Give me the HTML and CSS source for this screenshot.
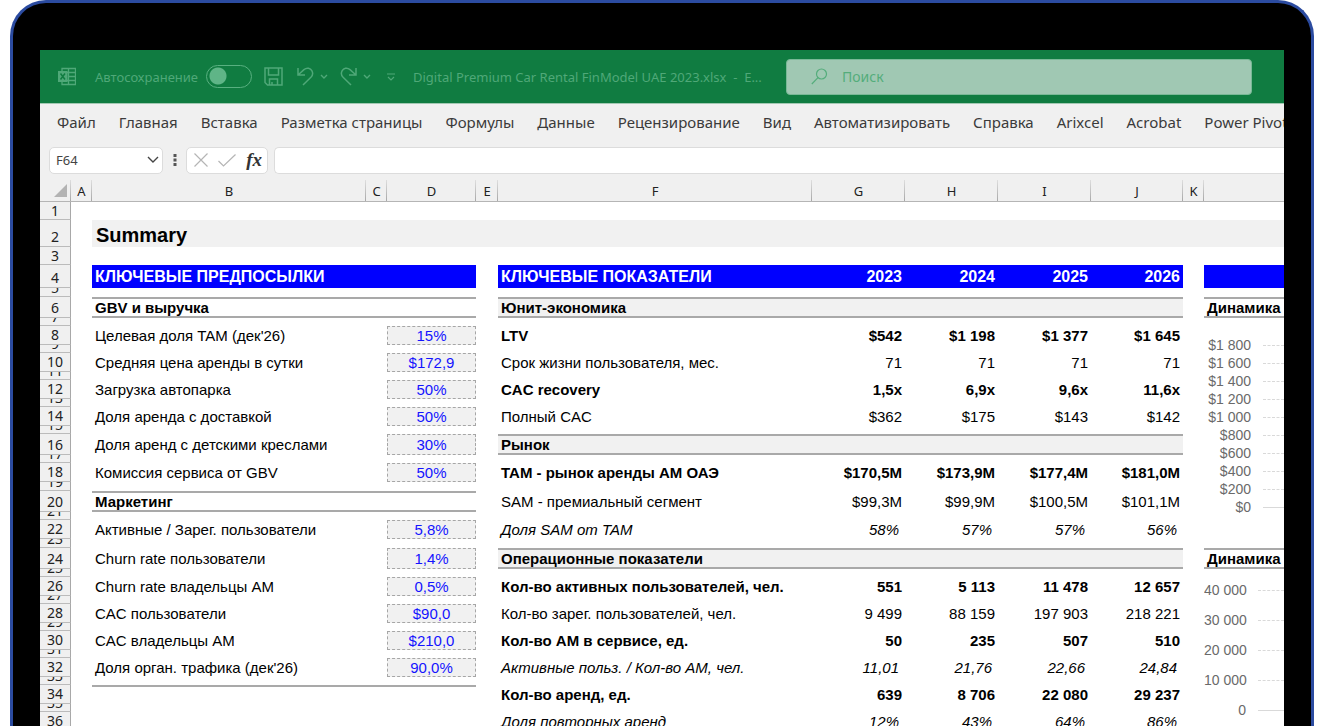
FILE: index.html
```html
<!DOCTYPE html>
<html lang="ru">
<head>
<meta charset="utf-8">
<title>Digital Premium Car Rental FinModel UAE 2023.xlsx</title>
<link rel="stylesheet" href="styles.css">
</head>
<body>
<div class="device">
<div class="screen">
  <header class="titlebar">
    <svg class="app-icon" width="18" height="19" viewBox="0 0 18 19" fill="none" stroke="currentColor" stroke-width="1.300"><path d="M4 4V1.500h13.500v16H4V15M10.500 1.500v16M4 5.500h13.500M10 9.500h7.500M4 13.500h13.500"/><path d="M0 4h9.500v11H0z" fill="currentColor" stroke="none"/><path class="app-x" d="M2.500 6.500l4.500 6M7 6.500l-4.500 6" stroke-width="1.500"/></svg>
    <label class="autosave"><span>Автосохранение</span><input type="checkbox" class="toggle"></label>
    <div class="quick">
      <button class="save" aria-label="Сохранить"><svg width="19" height="19" viewBox="0 0 19 19" fill="none" stroke="currentColor" stroke-width="1.500"><path d="M1 1h17v17H3.500L1 15.500zM4.500 1v7h10V1M5.500 18v-6h8v6M8 18v-3"/></svg></button>
      <button class="arrow" aria-label="Отменить"><svg width="17" height="19" viewBox="0 0 17 19" fill="none" stroke="currentColor" stroke-width="1.500"><path d="M1 1v7h7M1.300 7.700L7 2.600c3-2.500 6.500-1.200 7.800 1 1.400 2.400.8 4.900-.9 6.700L6 18"/></svg></button>
      <button class="more" aria-label="Список отмены"><svg width="8" height="6" viewBox="0 0 8 6" fill="none" stroke="currentColor" stroke-width="1.400"><path d="M1 1l3 3 3-3"/></svg></button>
      <button class="arrow" aria-label="Вернуть"><svg width="17" height="19" viewBox="0 0 17 19" fill="none" stroke="currentColor" stroke-width="1.500"><path d="M16 1v7H9M15.700 7.700L10 2.600C7 .1 3.500 1.400 2.200 3.600.8 6 1.400 8.500 3.100 10.300L11 18"/></svg></button>
      <button class="more" aria-label="Список возврата"><svg width="8" height="6" viewBox="0 0 8 6" fill="none" stroke="currentColor" stroke-width="1.400"><path d="M1 1l3 3 3-3"/></svg></button>
      <button class="custom" aria-label="Настройка панели"><svg width="8" height="8" viewBox="0 0 8 8" fill="none" stroke="currentColor" stroke-width="1.200"><path d="M0 1h8M1 4l3 3 3-3"/></svg></button>
    </div>
    <div class="doc">Digital Premium Car Rental FinModel UAE 2023.xlsx&nbsp; - &nbsp;E...</div>
    <label class="search"><svg width="17" height="17" viewBox="0 0 17 17" fill="none" stroke="currentColor" stroke-width="1.200"><circle cx="10.500" cy="6" r="5"/><path d="M7 9.700L.8 16"/></svg><input type="search" placeholder="Поиск" aria-label="Поиск"></label>
  </header>
  <nav class="ribbon">
    <button>Файл</button><button>Главная</button><button>Вставка</button><button>Разметка страницы</button><button>Формулы</button><button>Данные</button><button>Рецензирование</button><button>Вид</button><button>Автоматизировать</button><button>Справка</button><button>Arixcel</button><button>Acrobat</button><button>Power Pivot</button>
  </nav>
  <div class="formula">
    <label class="namebox"><input type="text" value="F64" aria-label="Имя ячейки"><svg width="12" height="8" viewBox="0 0 12 8" fill="none" stroke="currentColor" stroke-width="1.400"><path d="M1 1l5 5 5-5"/></svg></label>
    <svg class="dots" width="4" height="12" viewBox="0 0 4 12" fill="currentColor"><path d="M.5 0h3v3h-3zM.5 4.500h3v3h-3zM.5 9h3v3h-3z"/></svg>
    <div class="fx-group">
      <button aria-label="Отмена"><svg width="14" height="14" viewBox="0 0 14 14" fill="none" stroke="currentColor" stroke-width="1.200"><path d="M.5.5l13 13M13.500.5l-13 13"/></svg></button>
      <button aria-label="Ввод"><svg width="18" height="13" viewBox="0 0 18 13" fill="none" stroke="currentColor" stroke-width="1.200"><path d="M.5 7l5 5L17.500.5"/></svg></button>
      <button class="fx">fx</button>
    </div>
    <input class="formula-input" type="text" aria-label="Строка формул">
  </div>

  <table class="sheet">
    <colgroup><col class="c-head"><col class="c-s"><col class="c-b"><col class="c-s"><col class="c-d"><col class="c-e"><col class="c-f"><col class="c-y"><col class="c-y"><col class="c-y"><col class="c-j"><col class="c-s"><col></colgroup>
    <thead>
      <tr><th class="corner"><svg width="13" height="13" viewBox="0 0 13 13" fill="currentColor"><path d="M13 0v13H0z"/></svg></th><th>A</th><th>B</th><th>C</th><th>D</th><th>E</th><th>F</th><th>G</th><th>H</th><th>I</th><th>J</th><th>K</th><th></th></tr>
    </thead>
    <tbody>
      <tr class="r18"><th scope="row">1</th><td colspan="12"></td></tr>
      <tr class="r27"><th scope="row">2</th><td></td><td class="title" colspan="11">Summary</td></tr>
      <tr class="r18"><th scope="row">3</th><td colspan="12"></td></tr>
      <tr class="band"><th scope="row">4</th><td></td><td class="blue" colspan="3">КЛЮЧЕВЫЕ ПРЕДПОСЫЛКИ</td><td></td><td class="blue">КЛЮЧЕВЫЕ ПОКАЗАТЕЛИ</td><td class="blue n">2023</td><td class="blue n">2024</td><td class="blue n">2025</td><td class="blue n">2026</td><td></td><td class="blue"></td></tr>
      <tr class="gap tall"><th scope="row"><span>5</span></th><td colspan="12"></td></tr>
      <tr class="sec"><th scope="row">6</th><td></td><td class="rule" colspan="3">GBV и выручка</td><td></td><td class="rule fill" colspan="5">Юнит-экономика</td><td></td><td class="rule wide">Динамика</td></tr>
      <tr class="gap"><th scope="row"><span>7</span></th><td colspan="11"></td>
        <td class="chart" rowspan="17"><ul class="axis usd"><li><span>$1 800</span></li><li><span>$1 600</span></li><li><span>$1 400</span></li><li><span>$1 200</span></li><li><span>$1 000</span></li><li><span>$800</span></li><li><span>$600</span></li><li><span>$400</span></li><li><span>$200</span></li><li><span>$0</span></li></ul></td></tr>
      <tr><th scope="row">8</th><td></td><td>Целевая доля TAM (дек'26)</td><td></td><td class="in">15%</td><td></td><td class="b">LTV</td><td class="n b">$542</td><td class="n b">$1 198</td><td class="n b">$1 377</td><td class="n b">$1 645</td><td></td></tr>
      <tr class="gap"><th scope="row"><span>9</span></th><td colspan="11"></td></tr>
      <tr><th scope="row">10</th><td></td><td>Средняя цена аренды в сутки</td><td></td><td class="in">$172,9</td><td></td><td>Срок жизни пользователя, мес.</td><td class="n">71</td><td class="n">71</td><td class="n">71</td><td class="n">71</td><td></td></tr>
      <tr class="gap"><th scope="row"><span>11</span></th><td colspan="11"></td></tr>
      <tr><th scope="row">12</th><td></td><td>Загрузка автопарка</td><td></td><td class="in">50%</td><td></td><td class="b">CAC recovery</td><td class="n b">1,5x</td><td class="n b">6,9x</td><td class="n b">9,6x</td><td class="n b">11,6x</td><td></td></tr>
      <tr class="gap"><th scope="row"><span>13</span></th><td colspan="11"></td></tr>
      <tr><th scope="row">14</th><td></td><td>Доля аренда с доставкой</td><td></td><td class="in">50%</td><td></td><td>Полный CAC</td><td class="n">$362</td><td class="n">$175</td><td class="n">$143</td><td class="n">$142</td><td></td></tr>
      <tr class="gap"><th scope="row"><span>15</span></th><td colspan="11"></td></tr>
      <tr class="sec"><th scope="row">16</th><td></td><td class="reg">Доля аренд с детскими креслами</td><td></td><td class="in">30%</td><td></td><td class="rule fill" colspan="5">Рынок</td><td></td></tr>
      <tr class="gap"><th scope="row"><span>17</span></th><td colspan="11"></td></tr>
      <tr><th scope="row">18</th><td></td><td>Комиссия сервиса от GBV</td><td></td><td class="in">50%</td><td></td><td class="b">TAM - рынок аренды АМ ОАЭ</td><td class="n b">$170,5M</td><td class="n b">$173,9M</td><td class="n b">$177,4M</td><td class="n b">$181,0M</td><td></td></tr>
      <tr class="gap tall"><th scope="row"><span>19</span></th><td colspan="11"></td></tr>
      <tr class="sec"><th scope="row">20</th><td></td><td class="rule" colspan="3">Маркетинг</td><td></td><td class="reg">SAM - премиальный сегмент</td><td class="n reg">$99,3M</td><td class="n reg">$99,9M</td><td class="n reg">$100,5M</td><td class="n reg">$101,1M</td><td></td></tr>
      <tr class="gap"><th scope="row"><span>21</span></th><td colspan="11"></td></tr>
      <tr><th scope="row">22</th><td></td><td>Активные / Зарег. пользователи</td><td></td><td class="in">5,8%</td><td></td><td class="i">Доля SAM от TAM</td><td class="n i">58%</td><td class="n i">57%</td><td class="n i">57%</td><td class="n i">56%</td><td></td></tr>
      <tr class="gap tall"><th scope="row"><span>23</span></th><td colspan="11"></td></tr>
      <tr class="sec"><th scope="row">24</th><td></td><td class="reg">Churn rate пользователи</td><td></td><td class="in">1,4%</td><td></td><td class="rule fill" colspan="5">Операционные показатели</td><td></td><td class="rule wide">Динамика</td></tr>
      <tr class="gap"><th scope="row"><span>25</span></th><td colspan="11"></td>
        <td class="chart" rowspan="12"><ul class="axis users"><li><span>40 000</span></li><li><span>30 000</span></li><li><span>20 000</span></li><li><span>10 000</span></li><li><span>0</span></li></ul></td></tr>
      <tr><th scope="row">26</th><td></td><td>Churn rate владельцы АМ</td><td></td><td class="in">0,5%</td><td></td><td class="b">Кол-во активных пользователей, чел.</td><td class="n b">551</td><td class="n b">5 113</td><td class="n b">11 478</td><td class="n b">12 657</td><td></td></tr>
      <tr class="gap"><th scope="row"><span>27</span></th><td colspan="11"></td></tr>
      <tr><th scope="row">28</th><td></td><td>CAC пользователи</td><td></td><td class="in">$90,0</td><td></td><td>Кол-во зарег. пользователей, чел.</td><td class="n">9 499</td><td class="n">88 159</td><td class="n">197 903</td><td class="n">218 221</td><td></td></tr>
      <tr class="gap"><th scope="row"><span>29</span></th><td colspan="11"></td></tr>
      <tr><th scope="row">30</th><td></td><td>CAC владельцы АМ</td><td></td><td class="in">$210,0</td><td></td><td class="b">Кол-во АМ в сервисе, ед.</td><td class="n b">50</td><td class="n b">235</td><td class="n b">507</td><td class="n b">510</td><td></td></tr>
      <tr class="gap"><th scope="row"><span>31</span></th><td colspan="11"></td></tr>
      <tr><th scope="row">32</th><td></td><td>Доля орган. трафика (дек'26)</td><td></td><td class="in">90,0%</td><td></td><td class="i">Активные польз. / Кол-во АМ, чел.</td><td class="n i">11,01</td><td class="n i">21,76</td><td class="n i">22,66</td><td class="n i">24,84</td><td></td></tr>
      <tr class="gap"><th scope="row"><span>33</span></th><td colspan="11"></td></tr>
      <tr><th scope="row">34</th><td></td><td class="end" colspan="3"></td><td></td><td class="b">Кол-во аренд, ед.</td><td class="n b">639</td><td class="n b">8 706</td><td class="n b">22 080</td><td class="n b">29 237</td><td></td></tr>
      <tr class="gap"><th scope="row"><span>35</span></th><td colspan="11"></td></tr>
      <tr><th scope="row">36</th><td></td><td></td><td></td><td></td><td></td><td class="i">Доля повторных аренд</td><td class="n i">12%</td><td class="n i">43%</td><td class="n i">64%</td><td class="n i">86%</td><td></td></tr>
    </tbody>
  </table>
</div>
</div>
</body>
</html>
```
FILE: styles.css
```css
* { box-sizing: border-box; }
body {
  margin: 0;
  height: 100vh;
  overflow: hidden;
  background: #fff;
  font-family: "Noto Sans", "Open Sans", sans-serif;
}
button, input { font: inherit; color: inherit; border: 0; background: none; padding: 0; margin: 0; }
button { display: flex; align-items: center; flex: none; }
svg { display: block; flex: none; }

.device {
  margin: 0 6px 0 10px;
  padding: 47px 27px 0;
  border: 3px solid #2b4ba0;
  border-bottom: 0;
  border-radius: 36px 36px 0 0;
  background: #000;
}
.screen { overflow: hidden; background: #fff; }

/* title bar */
.titlebar {
  display: flex;
  align-items: center;
  height: 54px;
  padding: 0 32px 0 18px;
  background: #107c41;
  border-bottom: 1px solid #a3c9b3;
  color: #4fa878;
  font-size: 13px;
}
.app-x { stroke: #107c41; }
.autosave { display: flex; align-items: center; gap: 8px; margin-left: 19px; white-space: nowrap; }
.toggle {
  appearance: none;
  width: 46px;
  height: 23px;
  border: 1px solid #58b080;
  border-radius: 12px;
  background: radial-gradient(circle at 11px 10px, #5fb587 8px, transparent 9px);
}
.quick { display: flex; align-items: center; margin-left: 12px; }
.arrow { margin-left: 14px; }
.more { margin-left: 6px; }
.more + .arrow { margin-left: 12px; }
.custom { margin-left: 16px; }
.doc { flex: none; width: 344px; margin-left: 18px; white-space: nowrap; }
.search {
  display: flex;
  align-items: center;
  gap: 14px;
  flex: 1;
  min-width: 0;
  height: 36px;
  margin-left: 29px;
  padding: 0 24px;
  border: 1px solid #79b896;
  border-radius: 4px;
  background: #a0c8b3;
  color: #54ad7b;
  font-size: 14px;
}
.search input { flex: 1; min-width: 0; outline: 0; }
.search input::placeholder { color: #54ad7b; opacity: 1; }

/* ribbon tabs and formula bar */
.ribbon {
  display: flex;
  align-items: center;
  gap: 23px;
  height: 43px;
  padding: 0 0 8px 17px;
  background: #f0f0f0;
  color: #3b3b3b;
  font-size: 15px;
  white-space: nowrap;
}
.formula { display: flex; align-items: center; height: 33px; padding: 0 0 7px 9px; background: #f0f0f0; }
.namebox, .fx-group {
  display: flex;
  align-items: center;
  height: 27px;
  border: 1px solid #dcdcdc;
  border-radius: 5px;
  background: #fff;
  color: #444;
}
.namebox { width: 114px; padding: 0 3px 0 6px; font-size: 13px; }
.namebox input { flex: 1; min-width: 0; }
.dots { margin: 0 9px 0 10px; color: #555; }
.fx-group { width: 82px; padding: 0 5px 0 7px; justify-content: space-between; color: #b5b5b5; }
.fx { color: #333; font: italic bold 19px "Liberation Serif", serif; }
.formula-input { flex: 1; min-width: 0; height: 27px; margin-left: 6px; border: 1px solid #dcdcdc; border-right: 0; border-radius: 5px 0 0 5px; background: #fff; }

/* worksheet */
.sheet {
  width: 100%;
  table-layout: fixed;
  border-collapse: separate;
  border-spacing: 0;
  font: 15px/19px "Liberation Sans", Arial, sans-serif;
  color: #000;
}
.c-head { width: 31px; }
.c-s { width: 21px; }
.c-b { width: 274px; }
.c-d { width: 89px; }
.c-e { width: 22px; }
.c-f { width: 314px; }
.c-y { width: 93px; }
.c-j { width: 92px; }
.sheet th {
  padding: 0;
  background: #f0f0f0;
  font: 14px/18px "Noto Sans", "Open Sans", sans-serif;
  color: #222;
}
.sheet thead th {
  height: 22px;
  border-bottom: 1px solid #b5b5b5;
  background: linear-gradient(#dedede, #a8a8a8) right / 1px 100% no-repeat #f0f0f0;
  font-size: 13px;
}
.sheet thead th:last-child { background: #f0f0f0; }
.corner svg { margin-left: 14px; color: #b3b3b3; }
.sheet tbody th { border-right: 1px solid #a8a8a8; border-bottom: 1px solid #bbb; vertical-align: bottom; }
.sheet td { padding: 0 3px; height: 19px; white-space: nowrap; overflow: hidden; }
.r18 td { height: 18px; }
.sheet .r18 th { line-height: 17px; }
.r27 td { height: 27px; }
.sheet .gap > td { height: 8px; font-size: 0; line-height: 0; }
.sheet .gap.tall > td { height: 9px; }
.gap th span { display: flex; align-items: flex-end; justify-content: center; height: 7px; overflow: hidden; line-height: 17px; }
.gap.tall th span { height: 8px; }
.sheet .title { padding: 3px 4px 0; background: #f1f1f1; font-size: 20px; font-weight: bold; }
.sheet .band td { height: 23px; }
.sheet .blue { background: #00f; color: #fff; font-size: 16px; font-weight: bold; }
.sheet .sec td { height: 21px; line-height: 17px; }
.rule { border-top: 2px solid #a9a9a9; border-bottom: 2px solid #a9a9a9; font-weight: bold; }
.fill { background: #f1f1f1; }
.end { border-top: 2px solid #a9a9a9; }
.n { text-align: right; }
.b { font-weight: bold; }
.i { font-style: italic; }
.sheet .n.i { padding-right: 6px; }
.sheet .in { border: 1px dashed #a6a6a6; background: #f1f1f1; color: #1414ff; text-align: center; line-height: 17px; }
.sheet .gap .chart { padding: 0; vertical-align: top; }
.axis { margin: 0; padding: 0; list-style: none; font-size: 14px; color: #6a6a6a; }
.axis li { display: flex; align-items: center; gap: 12px; line-height: 18px; }
.axis li::after { content: ""; flex: 1; border-top: 1px dashed #d9d9d9; }
.axis li:last-child::after { border-top-style: solid; }
.axis span { text-align: right; }
.usd { padding-top: 18px; }
.usd span { width: 47px; }
.users { padding-top: 6px; }
.users li { line-height: 30px; }
.users span { width: 42px; }
```
